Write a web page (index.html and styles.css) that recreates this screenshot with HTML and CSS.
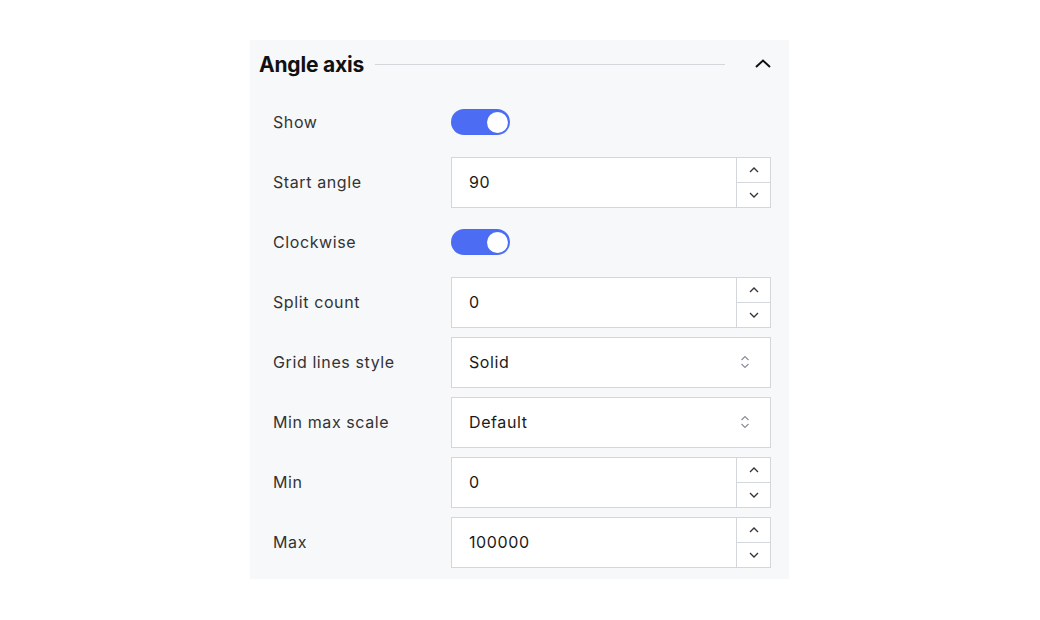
FILE: index.html
```html
<!DOCTYPE html>
<html lang="en">
<head>
    <meta charset="UTF-8">
    <title>Angle axis</title>
    <link rel="stylesheet" href="styles.css">
</head>
<body>
    <div class="panel">
        <div class="panel-header">
            <h2>Angle axis</h2>
            <div class="rule"></div>
            <svg class="collapse" width="18" height="12" viewBox="0 0 18 12"><path d="M2 9 L9 2.5 L16 9" fill="none" stroke="#111" stroke-width="2"/></svg>
        </div>

        <div class="row">
            <label>Show</label>
            <div class="toggle on"><span class="knob"></span></div>
        </div>

        <div class="row">
            <label>Start angle</label>
            <div class="field">
                <span class="value">90</span>
                <div class="spin">
                    <button><svg width="10" height="6" viewBox="0 0 10 6"><path d="M1 5 L5 1 L9 5" fill="none" stroke="#333" stroke-width="1.3"/></svg></button>
                    <button><svg width="10" height="6" viewBox="0 0 10 6"><path d="M1 1 L5 5 L9 1" fill="none" stroke="#333" stroke-width="1.3"/></svg></button>
                </div>
            </div>
        </div>

        <div class="row">
            <label>Clockwise</label>
            <div class="toggle on"><span class="knob"></span></div>
        </div>

        <div class="row">
            <label>Split count</label>
            <div class="field">
                <span class="value">0</span>
                <div class="spin">
                    <button><svg width="10" height="6" viewBox="0 0 10 6"><path d="M1 5 L5 1 L9 5" fill="none" stroke="#333" stroke-width="1.3"/></svg></button>
                    <button><svg width="10" height="6" viewBox="0 0 10 6"><path d="M1 1 L5 5 L9 1" fill="none" stroke="#333" stroke-width="1.3"/></svg></button>
                </div>
            </div>
        </div>

        <div class="row">
            <label>Grid lines style</label>
            <div class="field select">
                <span class="value">Solid</span>
                <svg class="updown" width="10" height="16" viewBox="0 0 10 16"><path d="M1.5 6 L5 2.5 L8.5 6 M1.5 10 L5 13.5 L8.5 10" fill="none" stroke="#8a8f98" stroke-width="1.2"/></svg>
            </div>
        </div>

        <div class="row">
            <label>Min max scale</label>
            <div class="field select">
                <span class="value">Default</span>
                <svg class="updown" width="10" height="16" viewBox="0 0 10 16"><path d="M1.5 6 L5 2.5 L8.5 6 M1.5 10 L5 13.5 L8.5 10" fill="none" stroke="#8a8f98" stroke-width="1.2"/></svg>
            </div>
        </div>

        <div class="row">
            <label>Min</label>
            <div class="field">
                <span class="value">0</span>
                <div class="spin">
                    <button><svg width="10" height="6" viewBox="0 0 10 6"><path d="M1 5 L5 1 L9 5" fill="none" stroke="#333" stroke-width="1.3"/></svg></button>
                    <button><svg width="10" height="6" viewBox="0 0 10 6"><path d="M1 1 L5 5 L9 1" fill="none" stroke="#333" stroke-width="1.3"/></svg></button>
                </div>
            </div>
        </div>

        <div class="row">
            <label>Max</label>
            <div class="field">
                <span class="value">100000</span>
                <div class="spin">
                    <button><svg width="10" height="6" viewBox="0 0 10 6"><path d="M1 5 L5 1 L9 5" fill="none" stroke="#333" stroke-width="1.3"/></svg></button>
                    <button><svg width="10" height="6" viewBox="0 0 10 6"><path d="M1 1 L5 5 L9 1" fill="none" stroke="#333" stroke-width="1.3"/></svg></button>
                </div>
            </div>
        </div>
    </div>
</body>
</html>
```

FILE: styles.css
```css
body {
    margin: 0;
    background: #fff;
    font-family: Inter, "Noto Sans", sans-serif;
}
.panel {
    width: 539px;
    margin: 40px 0 0 250px;
    background-color: #f7f8fa;
    padding: 0 0 7px 0;
}
.panel-header {
    display: flex;
    align-items: center;
    height: 48px;
    padding: 0 17px 4px 9px;
}
.panel-header h2 {
    margin: 0;
    font-size: 21px;
    font-weight: 700;
    color: #111;
    letter-spacing: -0.2px;
}
.rule {
    flex: 1;
    height: 1px;
    background-color: #d3d6db;
    margin: 0 29px 0 11px;
}
.collapse {
    display: block;
}
.row {
    display: flex;
    align-items: center;
    height: 60px;
    padding-left: 23px;
}
.row label {
    width: 178px;
    font-size: 16px;
    letter-spacing: 0.6px;
    color: #333;
}
.toggle {
    width: 59px;
    height: 26px;
    border-radius: 13px;
    background-color: #c9ccd3;
    position: relative;
}
.toggle.on {
    background-color: #4b6cf3;
}
.knob {
    position: absolute;
    top: 2.5px;
    right: 2.5px;
    width: 21px;
    height: 21px;
    border-radius: 50%;
    background: #fff;
}
.field {
    display: flex;
    align-items: stretch;
    width: 318px;
    height: 49px;
    border: 1px solid #d3d6db;
    background: #fff;
}
.field .value {
    flex: 1;
    display: flex;
    align-items: center;
    padding-left: 17px;
    font-size: 16px;
    letter-spacing: 0.6px;
    color: #1a1a1a;
}
.spin {
    width: 33px;
    border-left: 1px solid #d3d6db;
    display: flex;
    flex-direction: column;
}
.spin button {
    flex: 1;
    border: none;
    background: #fff;
    padding: 0;
    display: flex;
    align-items: center;
    justify-content: center;
}
.spin button + button {
    border-top: 1px solid #d3d6db;
}
.select {
    align-items: center;
}
.updown {
    margin-right: 20px;
}
```
